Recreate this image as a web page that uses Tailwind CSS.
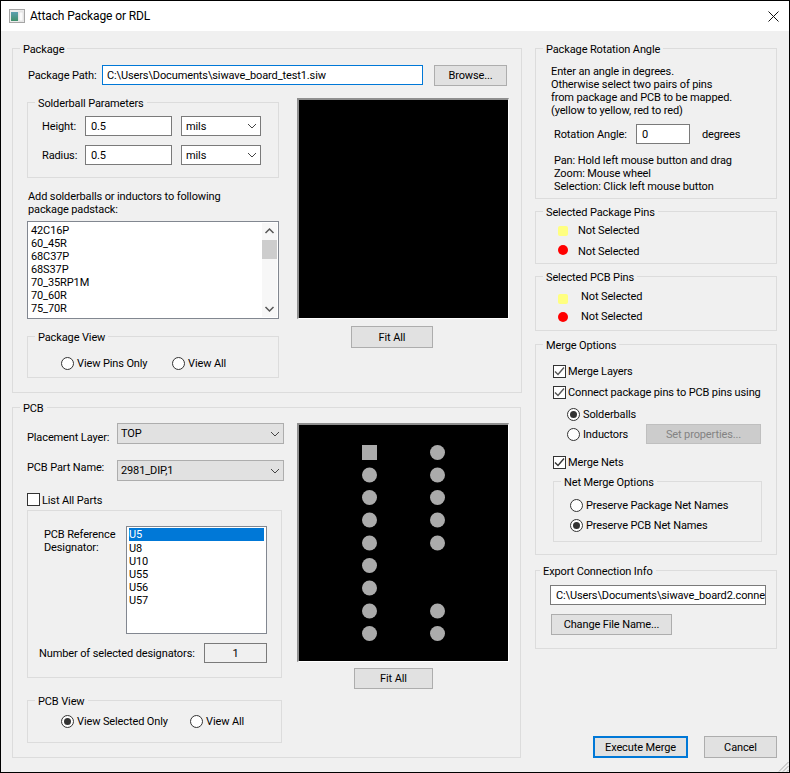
<!DOCTYPE html>
<html lang="en">
<head>
    <meta charset="UTF-8">
    <title>Attach Package or RDL</title>
    <script src="https://cdn.jsdelivr.net/npm/@tailwindcss/browser@4"></script>
</head>
<body class="bg-[#f0f0f0]">

<div class="w-[790px] h-[773px] border border-black bg-[#f0f0f0] overflow-hidden relative font-['Roboto',sans-serif] text-[11px] tracking-[-0.12px] leading-[13px] text-black whitespace-nowrap">

    <!-- title bar -->
    <div class="h-[30px] bg-white flex items-center pl-[8px]">
        <svg width="16" height="16" viewBox="0 0 16 16" class="shrink-0">
            <defs><linearGradient id="ico" x1="0" y1="0" x2="0" y2="1"><stop offset="0" stop-color="#5b9fb0"/><stop offset="1" stop-color="#3f8f6a"/></linearGradient></defs>
            <rect x="0.5" y="1.5" width="15" height="13" fill="#ececec" stroke="#a5a5a5"/>
            <rect x="2" y="4" width="7" height="9" fill="url(#ico)"/>
            <rect x="10" y="4" width="4" height="9" fill="#fafafa" stroke="#d0d0d0" stroke-width="0.5"/>
        </svg>
        <span class="ml-[5px] text-[12px]">Attach Package or RDL</span>
        <svg width="11" height="11" viewBox="0 0 11 11" class="ml-auto mr-[10px]">
            <path d="M0.5 0.5 L10.5 10.5 M10.5 0.5 L0.5 10.5" stroke="#111" fill="none"/>
        </svg>
    </div>

    <div class="flex items-start pl-[11px] pt-[17px]">

        <!-- left column -->
        <div class="w-[510px] shrink-0">

            <!-- Package -->
            <div class="relative h-[345px] border border-[#dcdcdc] pl-[15px]">
                <span class="absolute left-[7px] -top-[6px] bg-[#f0f0f0] px-[3px]">Package</span>
                <div class="flex items-center h-[20px] mt-[16px]">
                    <span class="w-[74px] shrink-0">Package Path:</span>
                    <div class="w-[321px] h-[20px] border border-[#0078d7] bg-white pl-[4px] flex items-center">C:\Users\Documents\siwave_board_test1.siw</div>
                    <button class="ml-[11px] w-[73px] h-[21px] border border-[#adadad] bg-[#e1e1e1]">Browse...</button>
                </div>
                <div class="flex mt-[17px]">
                    <div class="w-[252px] shrink-0 -ml-[1px]">
                        <div class="relative h-[76px] border border-[#dcdcdc] pl-[14px] pt-[13px]">
                            <span class="absolute left-[7px] -top-[6px] bg-[#f0f0f0] px-[3px]">Solderball Parameters</span>
                            <div class="flex items-center h-[20px]">
                                <span class="w-[43px]">Height:</span>
                                <div class="w-[87px] h-[20px] border border-[#7a7a7a] bg-white pl-[5px] flex items-center">0.5</div>
                                <div class="ml-[9px] w-[80px] h-[20px] border border-[#7a7a7a] bg-white pl-[4px] pr-[3px] flex items-center justify-between">mils
                                    <svg width="10" height="6" viewBox="0 0 10 6"><path d="M1 1 L5 5 L9 1" stroke="#444" fill="none"/></svg>
                                </div>
                            </div>
                            <div class="flex items-center h-[20px] mt-[9px]">
                                <span class="w-[43px]">Radius:</span>
                                <div class="w-[87px] h-[20px] border border-[#7a7a7a] bg-white pl-[5px] flex items-center">0.5</div>
                                <div class="ml-[9px] w-[80px] h-[20px] border border-[#7a7a7a] bg-white pl-[4px] pr-[3px] flex items-center justify-between">mils
                                    <svg width="10" height="6" viewBox="0 0 10 6"><path d="M1 1 L5 5 L9 1" stroke="#444" fill="none"/></svg>
                                </div>
                            </div>
                        </div>
                        <p class="mt-[12px] ml-[1px]">Add solderballs or inductors to following<br>package padstack:</p>
                        <div class="mt-[5px] h-[98px] border border-[#828790] bg-white flex justify-between p-px">
                            <div class="pl-[2px] pt-[1px]">
                                <div>42C16P</div><div>60_45R</div><div>68C37P</div><div>68S37P</div><div>70_35RP1M</div><div>70_60R</div><div>75_70R</div>
                            </div>
                            <div class="w-[15px] flex flex-col items-center justify-between bg-[#f7f7f7]">
                                <div class="w-full">
                                    <svg width="15" height="17" viewBox="0 0 15 17"><path d="M3.5 10 L7.5 6 L11.5 10" stroke="#555" stroke-width="1.5" fill="none"/></svg>
                                    <div class="h-[19px] bg-[#cdcdcd]"></div>
                                </div>
                                <svg width="15" height="17" viewBox="0 0 15 17"><path d="M3.5 7 L7.5 11 L11.5 7" stroke="#555" stroke-width="1.5" fill="none"/></svg>
                            </div>
                        </div>
                        <div class="relative h-[42px] mt-[17px] border border-[#dcdcdc] flex items-center pl-[33px] pt-[13px]">
                            <span class="absolute left-[7px] -top-[6px] bg-[#f0f0f0] px-[3px]">Package View</span>
                            <span class="w-[13px] h-[13px] rounded-full border border-[#333] bg-white"></span>
                            <span class="ml-[3px] w-[95px]">View Pins Only</span>
                            <span class="w-[13px] h-[13px] rounded-full border border-[#333] bg-white"></span>
                            <span class="ml-[3px]">View All</span>
                        </div>
                    </div>
                    <div class="ml-[18px] -mt-[4px] w-[212px]">
                        <div class="h-[221px] bg-black border-t-2 border-l-2 border-b border-r border-t-[#8f8f8f] border-l-[#8f8f8f] border-b-white border-r-white"></div>
                        <button class="block mt-[7px] ml-[54px] w-[82px] h-[22px] border border-[#adadad] bg-[#e1e1e1]">Fit All</button>
                    </div>
                </div>
            </div>

            <!-- PCB -->
            <div class="relative w-[509px] h-[351px] mt-[14px] border border-[#dcdcdc] pl-[14px]">
                <span class="absolute left-[7px] -top-[6px] bg-[#f0f0f0] px-[3px]">PCB</span>
                <div class="flex">
                    <div class="w-[255px] shrink-0">
                        <div class="flex h-[21px] mt-[15px]">
                            <span class="w-[90px] shrink-0 pt-[8px]">Placement Layer:</span>
                            <div class="w-[167px] shrink-0 h-[21px] border border-[#adadad] bg-[#e1e1e1] pl-[3px] pr-[3px] flex items-center justify-between">TOP
                                <svg width="10" height="6" viewBox="0 0 10 6"><path d="M1 1 L5 5 L9 1" stroke="#444" fill="none"/></svg>
                            </div>
                        </div>
                        <div class="flex h-[21px] mt-[16px]">
                            <span class="w-[90px] shrink-0 pt-[1px]">PCB Part Name:</span>
                            <div class="w-[167px] shrink-0 h-[21px] border border-[#adadad] bg-[#e1e1e1] pl-[3px] pr-[3px] flex items-center justify-between">2981_DIP,1
                                <svg width="10" height="6" viewBox="0 0 10 6"><path d="M1 1 L5 5 L9 1" stroke="#444" fill="none"/></svg>
                            </div>
                        </div>
                        <div class="flex items-center mt-[12px] h-[13px]">
                            <span class="w-[13px] h-[13px] border border-[#333] bg-white"></span>
                            <span class="ml-[2px] pt-[1px]">List All Parts</span>
                        </div>
                        <div class="h-[168px] mt-[4px] border border-[#dcdcdc] pt-[15px]">
                            <div class="flex">
                                <p class="ml-[16px] w-[82px] pt-[2px]">PCB Reference<br>Designator:</p>
                                <div class="h-[108px] w-[141px] border border-[#828790] bg-white p-px">
                                    <div class="bg-[#0078d7] text-white h-[13px] mx-px">U5</div>
                                    <div class="pl-[1px] pt-[1px]">
                                        <div>U8</div><div>U10</div><div>U55</div><div>U56</div><div>U57</div>
                                    </div>
                                </div>
                            </div>
                            <div class="flex items-center mt-[9px] ml-[11px]">
                                <span class="w-[165px]">Number of selected designators:</span>
                                <div class="w-[63px] h-[20px] border border-[#7a7a7a] flex items-center justify-center">1</div>
                            </div>
                        </div>
                        <div class="relative h-[43px] mt-[22px] border border-[#dcdcdc] flex items-center pl-[33px]">
                            <span class="absolute left-[7px] -top-[6px] bg-[#f0f0f0] px-[3px]">PCB View</span>
                            <span class="w-[13px] h-[13px] rounded-full border border-[#333] flex items-center justify-center bg-white">
                                <span class="w-[7px] h-[7px] rounded-full bg-[#333]"></span>
                            </span>
                            <span class="ml-[3px] w-[113px]">View Selected Only</span>
                            <span class="w-[13px] h-[13px] rounded-full border border-[#333] bg-white"></span>
                            <span class="ml-[3px]">View All</span>
                        </div>
                    </div>
                    <div class="ml-[15px] mt-[15px] w-[212px]">
                        <div class="h-[239px] bg-black border-t-2 border-l-2 border-b border-r border-t-[#8f8f8f] border-l-[#8f8f8f] border-b-white border-r-white pl-[63px] pt-[20px]">
                            <svg width="90" height="205" viewBox="0 0 90 205" class="block">
                                <g fill="#ababab">
                                    <rect x="0" y="0" width="15" height="15"/>
                                    <circle cx="7.5" cy="30" r="7.5"/>
                                    <circle cx="7.5" cy="52.5" r="7.5"/>
                                    <circle cx="7.5" cy="75" r="7.5"/>
                                    <circle cx="7.5" cy="98" r="7.5"/>
                                    <circle cx="7.5" cy="120.5" r="7.5"/>
                                    <circle cx="7.5" cy="143" r="7.5"/>
                                    <circle cx="7.5" cy="166" r="7.5"/>
                                    <circle cx="7.5" cy="188.5" r="7.5"/>
                                    <circle cx="75.5" cy="7.5" r="7.5"/>
                                    <circle cx="75.5" cy="30" r="7.5"/>
                                    <circle cx="75.5" cy="52.5" r="7.5"/>
                                    <circle cx="75.5" cy="75" r="7.5"/>
                                    <circle cx="75.5" cy="98" r="7.5"/>
                                    <circle cx="75.5" cy="166" r="7.5"/>
                                    <circle cx="75.5" cy="188.5" r="7.5"/>
                                </g>
                            </svg>
                        </div>
                        <button class="block mt-[6px] ml-[57px] w-[79px] h-[21px] border border-[#adadad] bg-[#e1e1e1]">Fit All</button>
                    </div>
                </div>
            </div>
        </div>

        <!-- right column -->
        <div class="w-[242px] ml-[13px] shrink-0">

            <div class="relative h-[151px] border border-[#dcdcdc] pl-[15px] pt-[16px]">
                <span class="absolute left-[7px] -top-[6px] bg-[#f0f0f0] px-[3px]">Package Rotation Angle</span>
                <p>Enter an angle in degrees.<br>Otherwise select two pairs of pins<br>from package and PCB to be mapped.<br>(yellow to yellow, red to red)</p>
                <div class="flex items-center ml-[3px] mt-[7px] h-[20px]">
                    <span class="w-[82px]">Rotation Angle:</span>
                    <div class="w-[54px] h-[20px] border border-[#7a7a7a] bg-white pl-[5px] flex items-center">0</div>
                    <span class="ml-[12px]">degrees</span>
                </div>
                <p class="ml-[3px] mt-[10px]">Pan: Hold left mouse button and drag<br>Zoom: Mouse wheel<br>Selection: Click left mouse button</p>
            </div>

            <div class="relative h-[53px] mt-[12px] border border-[#dcdcdc] pl-[22px]">
                <span class="absolute left-[7px] -top-[6px] bg-[#f0f0f0] px-[3px]">Selected Package Pins</span>
                <div class="flex items-center h-[13px] mt-[12px]">
                    <span class="w-[10px] h-[10px] bg-[#ffff80] rounded-[2px]"></span>
                    <span class="ml-[10px]">Not Selected</span>
                </div>
                <div class="flex items-center h-[13px] mt-[8px]">
                    <span class="w-[10px] h-[10px] bg-[#ff0000] rounded-full -mt-[3px]"></span>
                    <span class="ml-[10px]">Not Selected</span>
                </div>
            </div>

            <div class="relative h-[55px] mt-[12px] border border-[#dcdcdc] pl-[22px]">
                <span class="absolute left-[7px] -top-[6px] bg-[#f0f0f0] px-[3px]">Selected PCB Pins</span>
                <div class="flex items-center h-[13px] mt-[13px]">
                    <span class="w-[10px] h-[10px] bg-[#ffff80] rounded-[2px] mt-[4px]"></span>
                    <span class="ml-[13px]">Not Selected</span>
                </div>
                <div class="flex items-center h-[13px] mt-[7px]">
                    <span class="w-[10px] h-[10px] bg-[#ff0000] rounded-full"></span>
                    <span class="ml-[13px]">Not Selected</span>
                </div>
            </div>

            <div class="relative h-[211px] mt-[13px] border border-[#dcdcdc] pl-[17px]">
                <span class="absolute left-[7px] -top-[6px] bg-[#f0f0f0] px-[3px]">Merge Options</span>
                <div class="flex items-center h-[13px] mt-[20px]">
                    <span class="w-[13px] h-[13px] border border-[#333] bg-white flex items-center justify-center">
                        <svg width="11" height="11" viewBox="0 0 11 11"><path d="M1 5.5 L4 8.5 L10 1.5" stroke="#555" stroke-width="1.4" fill="none"/></svg>
                    </span>
                    <span class="ml-[2px]">Merge Layers</span>
                </div>
                <div class="flex items-center h-[13px] mt-[8px]">
                    <span class="w-[13px] h-[13px] border border-[#333] bg-white flex items-center justify-center">
                        <svg width="11" height="11" viewBox="0 0 11 11"><path d="M1 5.5 L4 8.5 L10 1.5" stroke="#555" stroke-width="1.4" fill="none"/></svg>
                    </span>
                    <span class="ml-[2px]">Connect package pins to PCB pins using</span>
                </div>
                <div class="flex items-center h-[13px] mt-[9px] ml-[14px]">
                    <span class="w-[13px] h-[13px] rounded-full border border-[#333] bg-white flex items-center justify-center">
                        <span class="w-[7px] h-[7px] rounded-full bg-[#333]"></span>
                    </span>
                    <span class="ml-[3px]">Solderballs</span>
                </div>
                <div class="flex items-center h-[20px] mt-[3px] ml-[14px]">
                    <span class="w-[13px] h-[13px] rounded-full border border-[#333] bg-white"></span>
                    <span class="ml-[3px] w-[63px]">Inductors</span>
                    <button class="w-[115px] h-[20px] border border-[#bfbfbf] bg-[#cccccc] text-[#838383]">Set properties...</button>
                </div>
                <div class="flex items-center h-[13px] mt-[12px]">
                    <span class="w-[13px] h-[13px] border border-[#333] bg-white flex items-center justify-center">
                        <svg width="11" height="11" viewBox="0 0 11 11"><path d="M1 5.5 L4 8.5 L10 1.5" stroke="#333" stroke-width="1.4" fill="none"/></svg>
                    </span>
                    <span class="ml-[2px]">Merge Nets</span>
                </div>
                <div class="relative h-[61px] w-[209px] mt-[12px] border border-[#dcdcdc] pl-[16px] pt-[17px]">
                    <span class="absolute left-[7px] -top-[6px] bg-[#f0f0f0] px-[3px]">Net Merge Options</span>
                    <div class="flex items-center h-[13px]">
                        <span class="w-[13px] h-[13px] rounded-full border border-[#333] bg-white"></span>
                        <span class="ml-[3px]">Preserve Package Net Names</span>
                    </div>
                    <div class="flex items-center h-[13px] mt-[7px]">
                        <span class="w-[13px] h-[13px] rounded-full border border-[#333] bg-white flex items-center justify-center">
                            <span class="w-[7px] h-[7px] rounded-full bg-[#333]"></span>
                        </span>
                        <span class="ml-[3px]">Preserve PCB Net Names</span>
                    </div>
                </div>
            </div>

            <div class="relative h-[79px] mt-[15px] border border-[#dcdcdc] pl-[14px]">
                <span class="absolute left-[4px] -top-[6px] bg-[#f0f0f0] px-[3px]">Export Connection Info</span>
                <div class="w-[216px] h-[20px] mt-[14px] border border-[#7a7a7a] bg-white pl-[5px] flex items-center overflow-hidden">C:\Users\Documents\siwave_board2.conne</div>
                <button class="block ml-[1px] mt-[9px] w-[121px] h-[21px] border border-[#adadad] bg-[#e1e1e1]">Change File Name...</button>
            </div>

            <div class="flex justify-end mt-[87px]">
                <button class="w-[95px] h-[22px] border-2 border-[#0078d7] bg-[#e1e1e1]">Execute Merge</button>
                <button class="ml-[16px] w-[73px] h-[22px] border border-[#adadad] bg-[#e1e1e1]">Cancel</button>
            </div>
        </div>
    </div>

    <!-- resize grip -->
    <svg width="12" height="12" viewBox="0 0 12 12" class="absolute right-0 bottom-0">
        <path d="M11.5 2 L2 11.5 M11.5 6 L6 11.5 M11.5 10 L10 11.5" stroke="#a8a8a8" fill="none"/>
    </svg>
</div>

</body>
</html>
